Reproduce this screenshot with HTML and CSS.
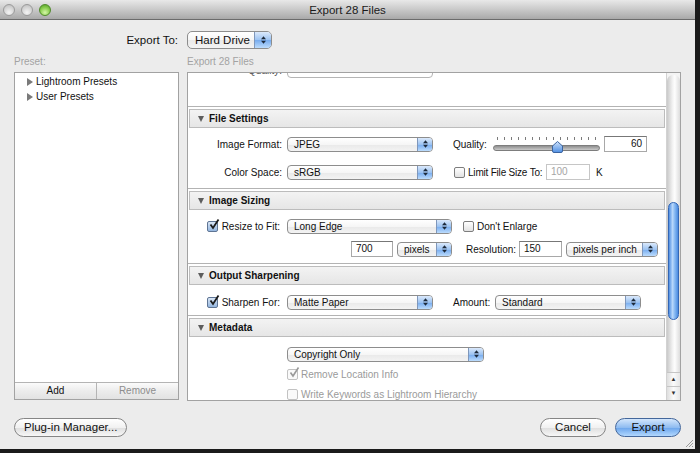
FILE: index.html
```html
<!DOCTYPE html>
<html lang="en">
  <head>
    <meta charset="UTF-8">
    <title>Export 28 Files</title>
    <link rel="stylesheet" href="styles.css">
  </head>
  <body>
    <div class="window">
      <div class="titlebar">
        <div class="lights">
          <span class="light"></span>
          <span class="light"></span>
          <span class="light green"></span>
        </div>
        <div class="title">Export 28 Files</div>
        <div class="lights-spacer"></div>
      </div>

      <div class="export-to">
        <span class="export-label">Export To:</span>
        <div class="popup big">
          <span class="popup-text">Hard Drive</span>
          <span class="popup-arrows"><svg width="7" height="10" viewBox="0 0 7 10"><path d="M1 4.2 L3.5 1.2 L6 4.2Z M1 5.8 L3.5 8.8 L6 5.8Z" fill="#1d2a3a"/></svg></span>
        </div>
      </div>

      <div class="main">
        <div class="col-left">
          <div class="caption">Preset:</div>
          <div class="preset-box">
            <div class="tree">
              <div class="tree-item"><span class="tri-right"></span>Lightroom Presets</div>
              <div class="tree-item"><span class="tri-right"></span>User Presets</div>
            </div>
            <div class="preset-buttons">
              <div class="pbtn">Add</div>
              <div class="pbtn off">Remove</div>
            </div>
          </div>
        </div>

        <div class="col-right">
          <div class="caption">Export 28 Files</div>
          <div class="panel">
            <div class="scroll">
              <!-- bottom of the section above, scrolled out of view -->
              <div class="remnant">
                <div class="row cut">
                  <span class="lab">Quality:</span>
                  <div class="popup w146 off">
                    <span class="popup-text"></span>
                    <span class="popup-arrows plain">&#9662;</span>
                  </div>
                </div>
              </div>

              <div class="section">
                <div class="section-head"><span class="tri-down"></span>File Settings</div>
                <div class="section-body file-body">
                  <div class="row">
                    <span class="lab">Image Format:</span>
                    <div class="popup w146">
                      <span class="popup-text">JPEG</span>
                      <span class="popup-arrows"><svg width="7" height="10" viewBox="0 0 7 10"><path d="M1 4.2 L3.5 1.2 L6 4.2Z M1 5.8 L3.5 8.8 L6 5.8Z" fill="#1d2a3a"/></svg></span>
                    </div>
                    <span class="quality-label">Quality:</span>
                    <div class="slider">
                      <div class="ticks"></div>
                      <div class="track"></div>
                      <svg class="thumb" width="11" height="12" viewBox="0 0 11 12">
                        <defs>
                          <linearGradient id="tg" x1="0" y1="0" x2="0" y2="1">
                            <stop offset="0" stop-color="#cfe2fb"/>
                            <stop offset="1" stop-color="#4f8fe3"/>
                          </linearGradient>
                        </defs>
                        <path d="M5.5 0.5 L10.5 5 L10.5 10 Q10.5 11.5 9 11.5 L2 11.5 Q0.5 11.5 0.5 10 L0.5 5Z" fill="url(#tg)" stroke="#3b64a0"/>
                      </svg>
                    </div>
                    <div class="field w43 right">60</div>
                  </div>
                  <div class="row">
                    <span class="lab">Color Space:</span>
                    <div class="popup w146">
                      <span class="popup-text">sRGB</span>
                      <span class="popup-arrows"><svg width="7" height="10" viewBox="0 0 7 10"><path d="M1 4.2 L3.5 1.2 L6 4.2Z M1 5.8 L3.5 8.8 L6 5.8Z" fill="#1d2a3a"/></svg></span>
                    </div>
                    <span class="check limit-check"></span>
                    <span class="limit-text">Limit File Size To:</span>
                    <div class="field w44 dim">100</div>
                    <span class="unit">K</span>
                  </div>
                </div>
              </div>

              <div class="section">
                <div class="section-head"><span class="tri-down"></span>Image Sizing</div>
                <div class="section-body sizing-body">
                  <div class="row">
                    <span class="lab">
                      <span class="check on"><svg width="12" height="12" viewBox="0 0 12 12"><path d="M2.5 5.5 L5 9 L10.5 0.5" fill="none" stroke="#1b1b1b" stroke-width="1.8"/></svg></span>
                      <span class="check-text">Resize to Fit:</span>
                    </span>
                    <div class="popup w165">
                      <span class="popup-text">Long Edge</span>
                      <span class="popup-arrows"><svg width="7" height="10" viewBox="0 0 7 10"><path d="M1 4.2 L3.5 1.2 L6 4.2Z M1 5.8 L3.5 8.8 L6 5.8Z" fill="#1d2a3a"/></svg></span>
                    </div>
                    <span class="check enlarge-check"></span>
                    <span class="check-text">Don't Enlarge</span>
                  </div>
                  <div class="row">
                    <div class="field w42 px-field">700</div>
                    <div class="popup w55 gap4">
                      <span class="popup-text">pixels</span>
                      <span class="popup-arrows"><svg width="7" height="10" viewBox="0 0 7 10"><path d="M1 4.2 L3.5 1.2 L6 4.2Z M1 5.8 L3.5 8.8 L6 5.8Z" fill="#1d2a3a"/></svg></span>
                    </div>
                    <span class="res-label">Resolution:</span>
                    <div class="field w43">150</div>
                    <div class="popup w92 gap4">
                      <span class="popup-text">pixels per inch</span>
                      <span class="popup-arrows"><svg width="7" height="10" viewBox="0 0 7 10"><path d="M1 4.2 L3.5 1.2 L6 4.2Z M1 5.8 L3.5 8.8 L6 5.8Z" fill="#1d2a3a"/></svg></span>
                    </div>
                  </div>
                </div>
              </div>

              <div class="section">
                <div class="section-head"><span class="tri-down"></span>Output Sharpening</div>
                <div class="section-body sharpen-body">
                  <div class="row">
                    <span class="lab">
                      <span class="check on"><svg width="12" height="12" viewBox="0 0 12 12"><path d="M2.5 5.5 L5 9 L10.5 0.5" fill="none" stroke="#1b1b1b" stroke-width="1.8"/></svg></span>
                      <span class="check-text">Sharpen For:</span>
                    </span>
                    <div class="popup w146">
                      <span class="popup-text">Matte Paper</span>
                      <span class="popup-arrows"><svg width="7" height="10" viewBox="0 0 7 10"><path d="M1 4.2 L3.5 1.2 L6 4.2Z M1 5.8 L3.5 8.8 L6 5.8Z" fill="#1d2a3a"/></svg></span>
                    </div>
                    <span class="amount-label">Amount:</span>
                    <div class="popup w146">
                      <span class="popup-text">Standard</span>
                      <span class="popup-arrows"><svg width="7" height="10" viewBox="0 0 7 10"><path d="M1 4.2 L3.5 1.2 L6 4.2Z M1 5.8 L3.5 8.8 L6 5.8Z" fill="#1d2a3a"/></svg></span>
                    </div>
                  </div>
                </div>
              </div>

              <div class="section">
                <div class="section-head"><span class="tri-down"></span>Metadata</div>
                <div class="section-body meta-body">
                  <div class="row indent">
                    <div class="popup w197">
                      <span class="popup-text">Copyright Only</span>
                      <span class="popup-arrows"><svg width="7" height="10" viewBox="0 0 7 10"><path d="M1 4.2 L3.5 1.2 L6 4.2Z M1 5.8 L3.5 8.8 L6 5.8Z" fill="#1d2a3a"/></svg></span>
                    </div>
                  </div>
                  <div class="row small indent">
                    <span class="check dis"><svg width="12" height="12" viewBox="0 0 12 12"><path d="M2.5 5.5 L5 9 L10.5 0.5" fill="none" stroke="#9a9a9a" stroke-width="1.6"/></svg></span>
                    <span class="check-text dim">Remove Location Info</span>
                  </div>
                  <div class="row small indent">
                    <span class="check dis"></span>
                    <span class="check-text dim">Write Keywords as Lightroom Hierarchy</span>
                  </div>
                </div>
              </div>
            </div>

            <div class="scrollbar">
              <div class="track">
                <div class="sb-thumb"></div>
              </div>
              <div class="sb-arrow">&#9650;</div>
              <div class="sb-arrow">&#9660;</div>
            </div>
          </div>
        </div>
      </div>

      <div class="footer">
        <div class="button">Plug-in Manager...</div>
        <div class="footer-right">
          <div class="button w66">Cancel</div>
          <div class="button w66 default">Export</div>
        </div>
      </div>

      <svg class="grip" width="10" height="10" viewBox="0 0 10 10">
        <path d="M9 2 L2 9 M9 5 L5 9 M9 8 L8 9" stroke="#9a9a9a" stroke-width="1"/>
      </svg>
    </div>
  </body>
</html>
```

FILE: styles.css
```css
body {
  margin: 0;
  background: #1b1b1b;
  font-family: "Liberation Sans", Arial, sans-serif;
  font-size: 10px;
  color: #111;
}

.window {
  position: relative;
  width: 695px;
  height: 449px;
  background: #ececec;
  display: flex;
  flex-direction: column;
}

/* title bar */
.titlebar {
  height: 19px;
  border-bottom: 1px solid #6c6c6c;
  background: linear-gradient(#e8e8e8, #c9c9c9 50%, #a9a9a9);
  display: flex;
  align-items: center;
}

.lights {
  width: 52px;
  display: flex;
  gap: 6px;
  padding-left: 3px;
  box-sizing: border-box;
}

.lights-spacer {
  width: 52px;
}

.light {
  width: 12px;
  height: 12px;
  border-radius: 50%;
  box-sizing: border-box;
  border: 1px solid #9a9a9a;
  background: radial-gradient(circle at 50% 75%, #f4f4f4, #d2d2d2 60%, #b9b9b9);
}

.light.green {
  border-color: #4f8a2a;
  background: radial-gradient(circle at 50% 75%, #d6f7a8, #88cc4e 55%, #4d9a22);
}

.title {
  flex: 1;
  text-align: center;
  font-size: 11.5px;
  color: #1a1a1a;
}

/* export to */
.export-to {
  display: flex;
  align-items: center;
  margin: 11px 0 0 14px;
  height: 18px;
}

.export-label {
  width: 164px;
  margin-right: 9px;
  text-align: right;
  font-size: 11.5px;
}

.popup.big {
  width: 85px;
  height: 18px;
  border-radius: 5px;
}

.popup.big .popup-text {
  font-size: 11.5px;
  padding-left: 7px;
}

.popup.big .popup-arrows {
  width: 16px;
}

/* main area */
.main {
  display: flex;
  gap: 8px;
  margin: 6px 0 0 14px;
}

.col-left {
  width: 165px;
}

.col-right {
  width: 494px;
}

.caption {
  height: 14px;
  line-height: 14px;
  margin-bottom: 3px;
  color: #a3a3a3;
}

.preset-box {
  height: 328px;
  box-sizing: border-box;
  border: 1px solid #a2a2a2;
  background: #fff;
  display: flex;
  flex-direction: column;
}

.tree {
  flex: 1;
  padding-top: 1px;
}

.tree-item {
  height: 15px;
  line-height: 15px;
  display: flex;
  align-items: center;
  padding-left: 12px;
}

.tri-right {
  width: 0;
  height: 0;
  border-left: 6px solid #7a7a7a;
  border-top: 4px solid transparent;
  border-bottom: 4px solid transparent;
  margin-right: 3px;
}

.preset-buttons {
  height: 16px;
  display: flex;
  border-top: 1px solid #b4b4b4;
  background: linear-gradient(#fbfbfb, #ececec 50%, #e2e2e2);
}

.pbtn {
  flex: 1;
  text-align: center;
  line-height: 16px;
}

.pbtn + .pbtn {
  border-left: 1px solid #b4b4b4;
}

.pbtn.off {
  color: #8d8d8d;
}

/* right panel */
.panel {
  height: 329px;
  box-sizing: border-box;
  border: 1px solid #a2a2a2;
  background: #fff;
  display: flex;
}

.scroll {
  flex: 1;
  overflow: hidden;
}

.remnant {
  height: 33px;
  overflow: hidden;
}

.row {
  height: 20px;
  display: flex;
  align-items: center;
  white-space: nowrap;
}

.row.cut {
  margin-top: -13px;
  color: #555;
}

.row.small {
  height: 19px;
}

.row.indent {
  padding-left: 99px;
}

.lab {
  width: 94px;
  margin-right: 5px;
  display: flex;
  justify-content: flex-end;
  align-items: center;
  text-align: right;
}

.section {
  border-top: 1px solid #b3b3b3;
}

.section-head {
  margin: 2px 1px 0;
  height: 17px;
  border: 1px solid #bcbcbc;
  background: linear-gradient(#f3f3f3, #e6e6e6);
  display: flex;
  align-items: center;
  padding-left: 8px;
  font-weight: bold;
}

.tri-down {
  width: 0;
  height: 0;
  border-top: 6px solid #5d5d5d;
  border-left: 3.5px solid transparent;
  border-right: 3.5px solid transparent;
  margin-right: 5px;
}

.file-body {
  height: 60px;
  box-sizing: border-box;
  padding-top: 6px;
  display: flex;
  flex-direction: column;
  gap: 8px;
}

.sizing-body {
  height: 53px;
  box-sizing: border-box;
  padding-top: 6px;
  display: flex;
  flex-direction: column;
  gap: 3px;
}

.sharpen-body {
  height: 30px;
  box-sizing: border-box;
  padding-top: 7px;
}

.meta-body {
  padding-top: 7px;
  display: flex;
  flex-direction: column;
  gap: 1px;
}

/* popup menus */
.popup {
  height: 15px;
  box-sizing: border-box;
  border: 1px solid #8d8d8d;
  border-radius: 4px;
  background: linear-gradient(#ffffff, #f6f6f6 50%, #e9e9e9 51%, #f3f3f3);
  display: flex;
  overflow: hidden;
  flex-shrink: 0;
}

.popup-text {
  flex: 1;
  padding-left: 6px;
  white-space: nowrap;
  display: flex;
  align-items: center;
}

.popup-arrows {
  width: 14px;
  border-left: 1px solid #7f97bb;
  background: linear-gradient(#dbe9fb, #9cc3f2 50%, #76abee 51%, #bcdcfd);
  display: flex;
  align-items: center;
  justify-content: center;
}

.popup-arrows.plain {
  border-left: none;
  background: none;
  color: #888;
  font-size: 9px;
}

.popup.off {
  border-color: #b5b5b5;
  background: #fff;
}

.w146 { width: 146px; }
.w165 { width: 165px; }
.w55 { width: 55px; }
.w92 { width: 92px; }
.w197 { width: 197px; }
.gap4 { margin-left: 4px; }

/* text fields */
.field {
  height: 16px;
  box-sizing: border-box;
  border: 1px solid #a8a8a8;
  border-top-color: #777;
  background: #fff;
  padding: 0 4px;
  line-height: 14px;
  flex-shrink: 0;
}

.field.right {
  text-align: right;
}

.field.dim {
  color: #a5a5a5;
  border-color: #c6c6c6;
}

.w42 { width: 42px; }
.w43 { width: 43px; }
.w44 { width: 44px; }

.px-field {
  margin-left: 163px;
}

.quality-label {
  margin-left: 20px;
  width: 40px;
}

.slider {
  position: relative;
  width: 107px;
  height: 20px;
}

.ticks {
  margin: 3px 2px 0 4px;
  height: 3px;
  background: repeating-linear-gradient(to right, #7b7b7b 0 1px, transparent 1px 7px);
}

.slider .track {
  margin-top: 5px;
  height: 4px;
  border: 1px solid #7d7d7d;
  border-radius: 3px;
  background: linear-gradient(#8f8f8f, #c9c9c9);
}

.thumb {
  position: absolute;
  left: 59px;
  top: 7px;
}

.slider + .field {
  margin-left: 4px;
}

.limit-check {
  margin-left: 21px;
}

.limit-text {
  margin-left: 3px;
  width: 78px;
  flex-shrink: 0;
  letter-spacing: -0.2px;
}

.unit {
  margin-left: 6px;
}

.enlarge-check {
  margin-left: 11px;
}

.res-label {
  margin-left: 14px;
  width: 53px;
}

.amount-label {
  margin-left: 20px;
  width: 42px;
}

/* checkboxes */
.check {
  position: relative;
  width: 11px;
  height: 11px;
  box-sizing: border-box;
  border: 1px solid #7d7d7d;
  border-radius: 2px;
  background: linear-gradient(#ffffff, #e2e2e2);
  flex-shrink: 0;
}

.check.on {
  background: linear-gradient(#d9e6f6, #94b6df);
  border-color: #5f7594;
}

.check.dis {
  border-color: #c2c2c2;
  background: #fafafa;
}

.check svg {
  position: absolute;
  left: 0;
  top: -3px;
}

.check-text {
  margin-left: 3px;
  white-space: nowrap;
}

.lab .check-text {
  margin-left: 4px;
  margin-right: 2px;
}

.check-text.dim {
  color: #9a9a9a;
}

/* scrollbar */
.scrollbar {
  width: 13px;
  border-left: 1px solid #d2d2d2;
  display: flex;
  flex-direction: column;
  background: #f4f4f4;
}

.scrollbar .track {
  flex: 1;
  margin-top: 2px;
  border-radius: 6px 6px 0 0;
  background: linear-gradient(to right, #c9c9c9, #f4f4f4 45%, #fdfdfd 60%, #dcdcdc);
  padding-top: 127px;
}

.sb-thumb {
  height: 118px;
  margin: 0 1px;
  box-sizing: border-box;
  border: 1px solid #3366b5;
  border-radius: 6px;
  background: linear-gradient(to right, #4f8ee2, #b9d8fb 40%, #8dbdf4 60%, #4a8be0);
}

.sb-arrow {
  height: 13px;
  border-top: 1px solid #c5c5c5;
  background: linear-gradient(to right, #dedede, #fbfbfb 50%, #e6e6e6);
  font-size: 6px;
  line-height: 13px;
  text-align: center;
  color: #333;
}

/* footer */
.footer {
  display: flex;
  justify-content: space-between;
  margin-top: 17px;
  padding: 0 14px;
}

.footer-right {
  display: flex;
  gap: 9px;
}

.button {
  height: 19px;
  box-sizing: border-box;
  padding: 0 9px;
  border: 1px solid #858585;
  border-radius: 10px;
  background: linear-gradient(#ffffff, #f1f1f1 50%, #dedede 51%, #f7f7f7);
  font-size: 11.5px;
  line-height: 17px;
  text-align: center;
  color: #111;
}

.button.w66 {
  width: 66px;
}

.button.default {
  border-color: #44679b;
  background: linear-gradient(#d3e6fc, #8fbcf1 50%, #6aa4ec 51%, #b2d8fe);
}

.grip {
  position: absolute;
  right: 1px;
  bottom: 1px;
}
```
